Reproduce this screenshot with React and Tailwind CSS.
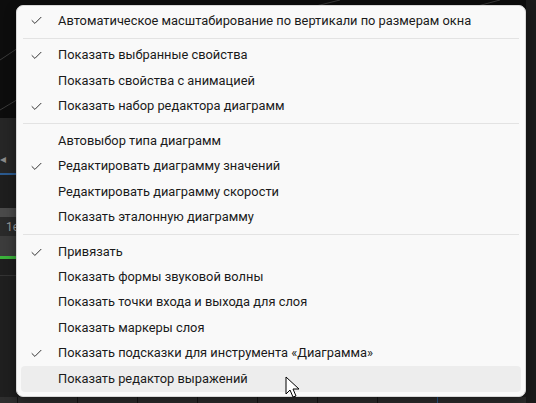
import React from "react";

const Check = () => (
  <svg width="11" height="9" viewBox="0 0 11 9" fill="none">
    <path d="M1 4.6 L3.9 7.4 L10 1.3" stroke="#333333" strokeWidth="1" strokeLinecap="round" strokeLinejoin="round" />
  </svg>
);

const groups = [
  [{ t: "Автоматическое масштабирование по вертикали по размерам окна", c: true }],
  [
    { t: "Показать выбранные свойства", c: true },
    { t: "Показать свойства с анимацией" },
    { t: "Показать набор редактора диаграмм", c: true },
  ],
  [
    { t: "Автовыбор типа диаграмм" },
    { t: "Редактировать диаграмму значений", c: true },
    { t: "Редактировать диаграмму скорости" },
    { t: "Показать эталонную диаграмму" },
  ],
  [
    { t: "Привязать", c: true },
    { t: "Показать формы звуковой волны" },
    { t: "Показать точки входа и выхода для слоя" },
    { t: "Показать маркеры слоя" },
    { t: "Показать подсказки для инструмента «Диаграмма»", c: true },
    { t: "Показать редактор выражений", h: true },
  ],
];

function Item({ t, c, h }) {
  return (
    <div className={`flex h-[25.4px] items-center rounded-[4px] ${h ? "bg-[#ededed]" : ""}`}>
      <div className="flex w-[37px] items-center pl-[10px]">{c ? <Check /> : null}</div>
      <span className="whitespace-nowrap">{t}</span>
    </div>
  );
}

export default function App() {
  return (
    <div className="relative h-[403px] w-[536px] overflow-hidden bg-[#1c1c1c]" style={{ fontFamily: 'Roboto, "Noto Sans", sans-serif' }}>
      {/* background app */}
      <div className="absolute inset-0 flex flex-col">
        <div className="relative h-[118px] bg-[#0d0d0d]">
          <svg className="absolute inset-0" width="536" height="118">
            <path d="M0 60 L60 20 M0 110 L50 80 M300 10 L340 0 M470 8 L500 0" stroke="#3a3a3a" strokeWidth="1" />
          </svg>
        </div>
        <div className="relative h-[55px] bg-[#262626]">
          <span className="absolute left-[0px] top-[32px] text-[12px] text-[#8a8a8a]">◂</span>
        </div>
        <div className="h-[2px] bg-[#2b5a8f]" />
        <div className="h-[33px] bg-[#1e1e1e]" />
        <div className="h-[9px] bg-[#4a4a4a]" />
        <div className="relative h-[19px] bg-[#2a2a2a]">
          <span className="absolute left-[6px] top-[1px] text-[12px] text-[#9a9a9a]">1e</span>
        </div>
        <div className="h-[20px] bg-[#3c3c3c]" />
        <div className="h-[3px] bg-[#3bb33b]" />
        <div className="h-[16px] bg-[#1e1e1e]" />
        <div className="h-[1px] bg-[#333]" />
        <div className="flex-1 bg-[#1f1f1f]" />
        <div className="flex h-[6px] bg-[#2e2e2e]">
          <div className="w-[18px] border-r border-[#151515]" />
          <div className="w-[60px] border-r border-[#151515]" />
          <div className="w-[60px] border-r border-[#151515]" />
          <div className="w-[60px] border-r border-[#151515]" />
          <div className="w-[60px] border-r border-[#151515]" />
          <div className="w-[60px] border-r border-[#151515]" />
          <div className="w-[60px] border-r border-[#151515]" />
          <div className="w-[60px] border-r border-[#2b5a8f]" />
        </div>
      </div>
      <div className="absolute right-0 top-0 h-full w-[10px] bg-[#1b1b1b]" />

      {/* menu */}
      <div className="absolute left-[16px] top-[5px] w-[510px] rounded-[7px] border border-[#d8d8d8] bg-[#f9f9f9] px-[4px] pb-[4px] pt-[2.3px] text-[12.85px] leading-none text-[#1a1a1a] shadow-[0_4px_12px_rgba(0,0,0,0.45)]">
        {groups.map((g, gi) => (
          <div key={gi}>
            {gi > 0 && (
              <div className="flex h-[9.3px] items-center px-[2px]">
                <div className="h-px w-full bg-[#e3e3e3]" />
              </div>
            )}
            {g.map((it, i) => (
              <Item key={i} {...it} />
            ))}
          </div>
        ))}
      </div>

      {/* cursor */}
      <svg className="absolute left-[285px] top-[376px]" width="16" height="24" viewBox="0 0 16 24">
        <path d="M1 1 L1 18 L5 14 L8 21 L11 20 L8 13 L14 13 Z" fill="#fff" stroke="#000" strokeWidth="1" strokeLinejoin="round" />
      </svg>
    </div>
  );
}
